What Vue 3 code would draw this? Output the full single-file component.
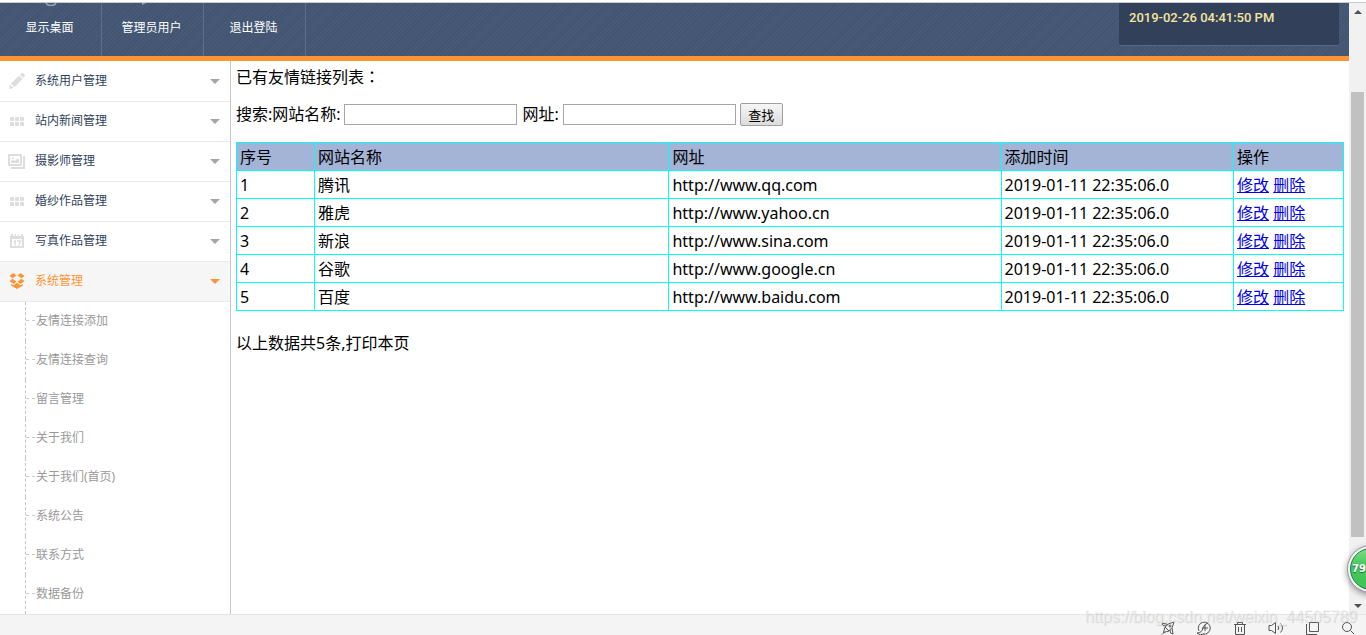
<script setup>
import { ref } from 'vue'

const navs = ['显示桌面', '管理员用户', '退出登陆']
const menus = [
  { name: '系统用户管理', icon: 'pencil' },
  { name: '站内新闻管理', icon: 'grid' },
  { name: '摄影师管理', icon: 'photo' },
  { name: '婚纱作品管理', icon: 'grid' },
  { name: '写真作品管理', icon: 'calendar' },
  { name: '系统管理', icon: 'box', open: true }
]
const subs = ['友情连接添加', '友情连接查询', '留言管理', '关于我们', '关于我们(首页)', '系统公告', '联系方式', '数据备份']
const rows = [
  ['腾讯', 'http://www.qq.com'],
  ['雅虎', 'http://www.yahoo.cn'],
  ['新浪', 'http://www.sina.com'],
  ['谷歌', 'http://www.google.cn'],
  ['百度', 'http://www.baidu.com']
]
const added = '2019-01-11 22:35:06.0'
const siteName = ref('')
const siteUrl = ref('')
</script>

<template>
  <div class="page">
    <div class="strip"></div>
    <div class="frame">
      <div class="view">
        <header class="top">
          <nav class="nav">
            <a v-for="(n, i) in navs" :key="n" href="#" class="nav-item">
              <svg v-if="i === 0" class="tip" width="12" height="3" viewBox="0 0 12 3"><path d="M1 0Q2 2.5 6 2.5Q10 2.5 11 0" fill="none" stroke="#9aa3b4" stroke-width="1.5" /></svg>
              <svg v-if="i === 1" class="tip tip-b" width="12" height="3" viewBox="0 0 12 3"><path d="M2 0V2L6 0" fill="#9aa3b4" /></svg>
              {{ n }}
            </a>
          </nav>
          <div class="clock">2019-02-26 04:41:50 PM</div>
        </header>
        <div class="body">
          <aside class="side">
            <ul class="menu">
              <li v-for="m in menus" :key="m.name">
                <a href="#" class="menu-item" :class="{ open: m.open }">
                  <svg class="icon" width="18" height="18" viewBox="0 0 18 18" fill="currentColor">
                    <g v-if="m.icon === 'pencil'">
                      <path d="M1 17l1-4.5L5.500 16zM3 11.500L11 3.500 14.500 7 6.500 15zM12 2.500L13.500 1Q14.500 .5 15.500 1.500L16.500 2.500Q17.500 3.500 16.500 4.500L15.200 6z" />
                    </g>
                    <g v-else-if="m.icon === 'grid'">
                      <rect v-for="k in 6" :key="k" :x="2 + ((k - 1) % 3) * 5" :y="k < 4 ? 5 : 10" width="4" height="4" rx="1" />
                    </g>
                    <g v-else-if="m.icon === 'photo'">
                      <path fill-rule="evenodd" d="M1 2h12q1 0 1 1v10q0 1-1 1H1q-1 0-1-1V3q0-1 1-1zm1 2v8h10V4zM15 4h2v13H3v-2h12z" />
                      <path d="M3 11V9l2-1 2 1 3-3 1 2v3zM4 5.500h2V7H4z" />
                    </g>
                    <g v-else-if="m.icon === 'calendar'">
                      <path fill-rule="evenodd" d="M2 4h1V2h2v2h2V2h1v2h2V2h1v2h2V2h2v2h1v12H2zm2 3v7h10V7z" />
                      <path fill="none" stroke="currentColor" stroke-width="1.500" d="M5.500 10l1.500-1v4.500M9 9h3.500l-1.500 4.500" />
                    </g>
                    <g v-else>
                      <path d="M5.500 1L8.500 3.500 4.500 6.200 1.500 4zM12.500 1L16.500 4 13.500 6.200 9.500 3.500zM4.500 6.800L8.500 9.800 5.500 12 1.500 9zM13.500 6.800L16.500 9 12.500 12 9.500 9.800zM3 12L5.500 13.200 9 10.800 12.500 13.200 15 12V13.500L9 17 3 13.500z" />
                    </g>
                  </svg>
                  <span>{{ m.name }}</span>
                  <i class="caret"></i>
                </a>
              </li>
            </ul>
            <ul class="sub">
              <li v-for="s in subs" :key="s"><a href="#">{{ s }}</a></li>
            </ul>
          </aside>
          <main class="main">
            <p class="title">已有友情链接列表<span class="colon">：</span></p>
            <form class="search" @submit.prevent>
              <label for="site-name">搜索:网站名称:</label>
              <input id="site-name" v-model="siteName" type="text">
              <label for="site-url" class="second">网址:</label>
              <input id="site-url" v-model="siteUrl" type="text">
              <button type="submit">查找</button>
            </form>
            <table>
              <colgroup>
                <col class="c-no"><col class="c-name"><col class="c-url"><col class="c-time"><col class="c-op">
              </colgroup>
              <thead>
                <tr><th>序号</th><th>网站名称</th><th>网址</th><th>添加时间</th><th>操作</th></tr>
              </thead>
              <tbody>
                <tr v-for="(r, i) in rows" :key="r[1]">
                  <td>{{ i + 1 }}</td>
                  <td>{{ r[0] }}</td>
                  <td>{{ r[1] }}</td>
                  <td>{{ added }}</td>
                  <td><a href="#">修改</a> <a href="#">删除</a></td>
                </tr>
              </tbody>
            </table>
            <p class="total">以上数据共5条,打印本页</p>
          </main>
        </div>
      </div>
      <div class="scroll">
        <i class="arrow up"></i>
        <div class="track"><div class="thumb"></div></div>
        <i class="arrow down"></i>
      </div>
    </div>
    <footer class="status">
      <svg width="16" height="16" viewBox="0 0 16 16"><path d="M5 7Q8 3 14 2Q13 8 9 11zM6 6L3 5.500 2 3 8 4.500M10 10L10.500 13 13 14 12 8M5 7L3.500 12.500 9 11M2 14.500L5 11.500" /><circle cx="10" cy="6" r="1" /></svg>
      <svg width="16" height="16" viewBox="0 0 16 16"><path d="M3 11A6 6 0 1 1 7 14M1 13Q6 13 7 8Q8 4 12 3M1 13Q4 16 8 14M9 5v6M6 8h6" /></svg>
      <svg width="16" height="16" viewBox="0 0 16 16"><path d="M2 4.500h12M5.500 4V2.500h5V4M3.500 5v9.500h9V5M6.500 7v5M9.500 7v5" /></svg>
      <svg width="16" height="16" viewBox="0 0 16 16"><path d="M1 5.500h2.500L7.500 2.500v11L3.500 10.500H1zM10 6q1.500 2 0 4M12.500 3.500q4 4.500 0 9" /></svg>
      <svg width="16" height="16" viewBox="0 0 16 16"><path d="M5.500 2.500h9v9h-9zM2.500 4v10.500H13" /></svg>
      <svg width="16" height="16" viewBox="0 0 16 16"><path d="M11.500 7A4.500 4.500 0 1 1 2.500 7A4.500 4.500 0 1 1 11.500 7M10.500 10.500L14 14" /></svg>
    </footer>
    <div class="watermark">https://blog.csdn.net/weixin_44505789</div>
    <div class="ball"><span>79</span></div>
  </div>
</template>

<style>
html, body { margin: 0; overflow: hidden; }
</style>

<style scoped>
.page {
  position: relative;
  display: flex;
  flex-direction: column;
  height: 100vh;
  overflow: hidden;
  background: #fff;
  color: #000;
  font: 16px/21px "Noto Sans", "Noto Sans CJK SC", sans-serif;
}
* { box-sizing: border-box; }
ul { margin: 0; padding: 0; list-style: none; }
.strip { flex: none; height: 3px; border-bottom: 1px solid #c9cacd; }
.frame { flex: 1; display: flex; min-height: 0; }
.view { flex: 1; display: flex; flex-direction: column; min-width: 0; }
.top {
  flex: none;
  display: flex;
  justify-content: space-between;
  height: 58px;
  padding-right: 10px;
  border-bottom: 5px solid #fe9433;
  background: repeating-linear-gradient(135deg, #40536f 0 1px, #475977 1px 3px);
}
.nav { display: flex; }
.nav-item {
  position: relative;
  width: 102px;
  padding-right: 2px;
  border-right: 1px solid #5d6f8e;
  color: #fff;
  font-size: 12px;
  line-height: 49px;
  text-align: center;
  text-decoration: none;
}
.tip { position: absolute; left: 45px; top: 0; }
.tip-b { left: 38px; }
.clock {
  width: 220px;
  height: 43px;
  padding: 5px 10px;
  border-bottom: 1px solid #53688a;
  border-radius: 0 0 2px 2px;
  background: #324059;
  color: #f5e6a0;
  font: 500 13px/20px Roboto, sans-serif;
}
.body { flex: 1; display: flex; min-height: 0; overflow: hidden; }
.side { flex: none; width: 231px; border-right: 1px solid #c8c8c8; font-size: 12px; }
.menu-item {
  display: flex;
  align-items: center;
  height: 40px;
  padding: 0 10px 0 8px;
  border-top: 1px solid #ebebeb;
  color: #ddd;
  text-decoration: none;
}
li:first-child .menu-item { border-color: #fff; }
.icon { margin-bottom: 2px; }
.menu-item span { flex: 1; margin: 0 0 2px 9px; color: #2f3f5a; }
.menu-item.open { background: #f6f6f6; color: #fe9433; }
.menu-item.open span { color: #fe9433; }
.caret { border: 5px solid transparent; border-top-color: #a6a6a6; border-bottom: 0; }
.open .caret { border-top-color: #fe9433; }
.sub { border-top: 1px solid #ebebeb; }
.sub li { height: 39px; margin-left: 25px; border-left: 1px dashed #c5c5c5; }
.sub a { display: flex; align-items: center; gap: 1px; height: 37px; color: #999; text-decoration: none; }
.sub a::before { content: ""; width: 9px; border-top: 1px dashed #ccc; }
.main { flex: 1; min-width: 0; padding: 6px 5px 0; }
p { margin: 0; }
.colon { font-family: "Noto Sans CJK TC", sans-serif; line-height: 1; }
.search { display: flex; align-items: center; gap: 4px; height: 23px; margin: 15px 0 16px; }
.search input { width: 173px; height: 21px; padding: 1px; border: 1px solid #a6a6a6; background: #fff; }
.search label { margin-right: -1px; }
.search .second { margin: 0 0 0 2px; }
.search button {
  width: 43px;
  height: 23px;
  padding: 0;
  border: 1px solid #a0a0a0;
  border-radius: 2px;
  background: linear-gradient(#f6f6f6, #dcdcdc);
  color: #000;
  font: 13px/20px "Noto Sans CJK SC", sans-serif;
}
table { width: 100%; border-collapse: collapse; table-layout: fixed; }
.c-no { width: 78px; }
.c-url { width: 30%; }
.c-time { width: 21%; }
.c-op { width: 110px; }
th, td { height: 28px; padding: 4px 3px 2px; border: 1px solid #0ff; text-align: left; font-weight: 400; white-space: nowrap; }
th { background: #a3b4d7; }
td a { color: #00e; }
.total { margin-top: 22px; }
.scroll { flex: none; display: flex; flex-direction: column; align-items: center; width: 17px; padding: 7px 0 6px; background: #f1f1f1; }
.arrow { border: 4px solid transparent; }
.up { border-top: 0; border-bottom-color: #505050; }
.down { border-bottom: 0; border-top-color: #505050; }
.track { flex: 1; width: 13px; padding: 78px 0 67px; }
.thumb { height: 100%; background: #c1c1c1; }
.status {
  flex: none;
  display: flex;
  align-items: center;
  justify-content: flex-end;
  gap: 20px;
  height: 21px;
  padding: 5px 10px 0 0;
  border-top: 1px solid #e4e4e4;
  background: #f4f4f4;
}
.status svg { fill: none; stroke: #555; stroke-width: 1; }
.watermark {
  position: absolute;
  right: 9px;
  bottom: 8px;
  color: rgba(240, 240, 240, .6);
  font: 16px/20px "Liberation Sans", sans-serif;
  text-shadow: 1px 1px 1px rgba(160, 160, 160, .4);
}
.ball {
  position: absolute;
  right: -29px;
  bottom: 42px;
  width: 48px;
  height: 48px;
  padding: 2px;
  border: 1px solid #9a9a9a;
  border-radius: 50%;
  background: #f4f4f4;
  box-shadow: 0 2px 6px rgba(0, 0, 0, .4);
}
.ball span {
  display: block;
  height: 42px;
  padding-left: 1px;
  border: 1px solid #16805a;
  border-radius: 50%;
  background: linear-gradient(#7ddc85, #48c85c 40%, #3fc454);
  color: #fff;
  font: bold 10px/40px "DejaVu Sans", sans-serif;
  text-shadow: 0 1px 1px #17683a;
}
</style>
